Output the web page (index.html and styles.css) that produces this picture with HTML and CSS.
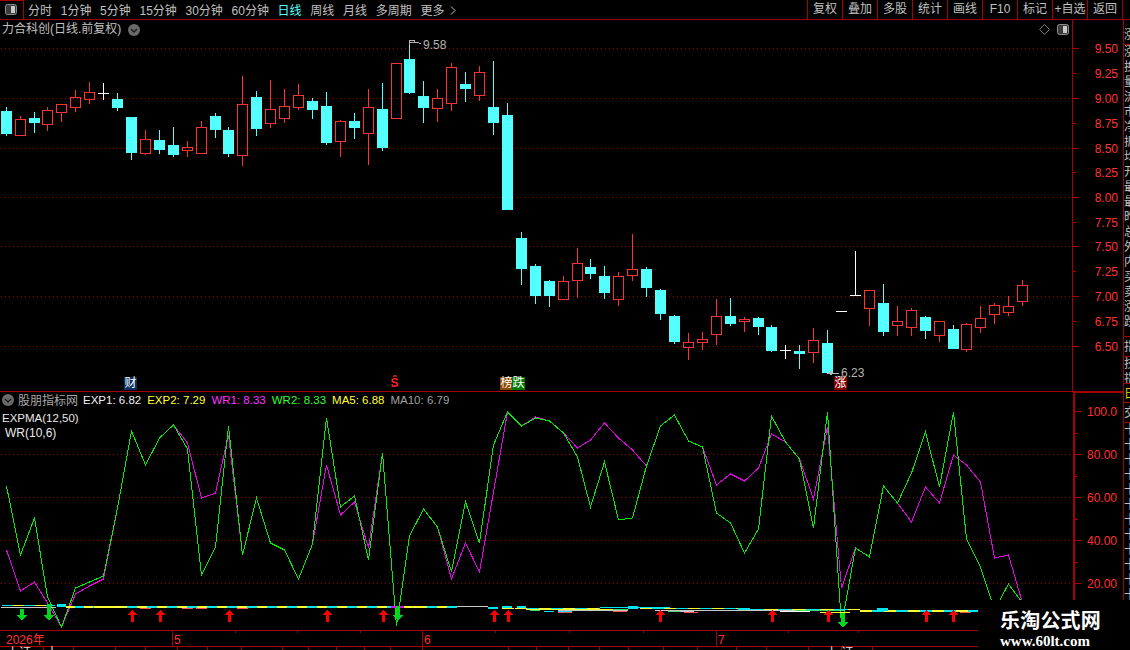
FILE: index.html
```html
<!DOCTYPE html>
<html lang="en">
<head>
    <meta charset="UTF-8">
    <meta name="viewport" content="width=device-width, initial-scale=1.0">
    <title>力合科创 日线</title>
    <link rel="stylesheet" href="styles.css">
</head>
<body>
    <div class="terminal">
        <div class="toolbar">
            <div class="panel-toggle">
                <svg class="panel-icon" width="12" height="11" viewBox="0 0 12 11"><rect x="0.5" y="0.5" width="11" height="10" rx="2" fill="#3c3c3c" stroke="#8c8c8c"/><rect x="6" y="2" width="4" height="7" fill="#c8c8c8"/></svg>
            </div>
            <div class="periods">
                <span>分时</span>
                <span>1分钟</span>
                <span>5分钟</span>
                <span>15分钟</span>
                <span>30分钟</span>
                <span>60分钟</span>
                <span class="active">日线</span>
                <span>周线</span>
                <span>月线</span>
                <span>多周期</span>
                <span>更多 <svg class="more-icon" width="6" height="9" viewBox="0 0 6 9"><path d="M1 0.5l4 4-4 4" fill="none" stroke="#c0c0c0"/></svg></span>
            </div>
            <div class="tool-buttons">
                <span>复权</span>
                <span>叠加</span>
                <span>多股</span>
                <span>统计</span>
                <span>画线</span>
                <span>F10</span>
                <span>标记</span>
                <span>+自选</span>
                <span>返回</span>
            </div>
        </div>

        <div class="workspace">
            <div class="charts">
                <div class="main-panel">
                    <svg id="mainChart" class="chart" width="1123" height="371" viewBox="0 20 1123 371"></svg>
                    <div class="stock-title">
                        力合科创(日线.前复权)
                        <svg class="round-icon" width="12" height="12" viewBox="0 0 12 12"><circle cx="6" cy="6" r="6" fill="#6a6a6a"/><path d="M3 5l3 3 3-3" fill="none" stroke="#1c1c1c" stroke-width="1.5"/></svg>
                    </div>
                    <div class="corner-icons">
                        <svg width="11" height="11" viewBox="0 0 11 11"><path d="M5.5 0.5l5 5-5 5-5-5z" fill="none" stroke="#777"/></svg>
                        <svg width="12" height="11" viewBox="0 0 12 11"><rect x="0.5" y="0.5" width="11" height="10" rx="2" fill="#3c3c3c" stroke="#8c8c8c"/><rect x="6" y="2" width="4" height="7" fill="#c8c8c8"/></svg>
                    </div>
                    <span class="badge badge-cai">财</span>
                    <span class="badge badge-s">Ŝ</span>
                    <span class="badge badge-bang">榜</span>
                    <span class="badge badge-die">跌</span>
                    <span class="badge badge-zhang">涨</span>
                    <span class="price-note note-high">9.58</span>
                    <span class="price-note note-low">6.23</span>
                </div>

                <div class="indicator-panel">
                    <svg id="indicatorChart" class="chart" width="1123" height="238" viewBox="0 392 1123 238"></svg>
                    <div class="legend">
                        <svg class="round-icon" width="12" height="12" viewBox="0 0 12 12"><circle cx="6" cy="6" r="6" fill="#6a6a6a"/><path d="M3 5l3 3 3-3" fill="none" stroke="#1c1c1c" stroke-width="1.5"/></svg>
                        <span class="legend-name">股朋指标网</span>
                        <span class="c-white">EXP1: 6.82</span>
                        <span class="c-yellow">EXP2: 7.29</span>
                        <span class="c-magenta">WR1: 8.33</span>
                        <span class="c-green">WR2: 8.33</span>
                        <span class="c-yellow">MA5: 6.88</span>
                        <span class="c-grey">MA10: 6.79</span>
                    </div>
                    <div class="formula-names">
                        <div class="formula-exp">EXPMA(12,50)</div>
                        <div class="formula-wr">WR(10,6)</div>
                    </div>
                </div>

                <svg id="timeAxis" class="chart" width="1123" height="20" viewBox="0 630 1123 20"></svg>
            </div>

            <div class="side-strip">
                <div class="side-cell">涨跌</div>
                <div class="side-list">
                    <div>涨</div><div>换</div><div>量</div><div>流</div><div>市</div><div>净</div><div>振</div><div>均</div>
                    <div>开</div><div>最</div><div>最</div><div>昨</div><div>总</div><div>外</div><div>内</div><div>买</div>
                    <div>卖</div><div>涨</div><div>跌</div>
                </div>
                <div class="side-cell">指</div>
                <div class="side-list short">
                    <div>技</div><div>指</div>
                </div>
                <div class="side-cell side-yellow">日</div>
                <div class="side-cell">交</div>
                <div class="side-list">
                    <div>十</div><div>十</div><div>十</div><div>十</div><div>十</div><div>十</div><div>十</div><div>十</div>
                    <div>十</div><div>十</div><div>十</div><div>十</div>
                </div>
            </div>
        </div>

        <div class="watermark">
            <div class="watermark-name">乐淘公式网</div>
            <div class="watermark-url">www.60lt.com</div>
        </div>
    </div>

    <script src="chart.js"></script>
</body>
</html>
```

FILE: styles.css
```css
* {
    margin: 0;
    padding: 0;
    box-sizing: border-box;
}
body {
    background: #000;
    color: #c0c0c0;
    font-family: "Liberation Sans", "Noto Sans CJK SC", sans-serif;
    font-size: 12px;
    overflow: hidden;
}
.terminal {
    position: relative;
    width: 1130px;
    height: 650px;
    overflow: hidden;
}
.toolbar {
    display: flex;
    align-items: stretch;
    height: 20px;
    border-bottom: 1px solid #a80000;
}
.panel-toggle {
    display: flex;
    width: 24px;
    padding: 3px 0 0 5px;
    border-top: 1px solid #a80000;
    border-right: 1px solid #a80000;
}
.periods {
    display: flex;
    align-items: center;
    gap: 8.7px;
    padding-left: 4px;
    white-space: nowrap;
}
.periods .active {
    color: #54ffff;
}
.more-icon {
    margin-left: 2px;
}
.tool-buttons {
    display: flex;
    margin-left: auto;
    margin-right: 7px;
    width: 316px;
}
.tool-buttons span {
    flex: 1;
    border-left: 1px solid #a80000;
    line-height: 19px;
    text-align: center;
    white-space: nowrap;
}
.tool-buttons span:last-child {
    border-right: 1px solid #a80000;
}
.workspace {
    display: flex;
    height: 630px;
}
.charts {
    width: 1123px;
    flex-shrink: 0;
}
.chart {
    display: block;
    shape-rendering: crispEdges;
}
.main-panel {
    position: relative;
    height: 372px;
    border-bottom: 1px solid #a80000;
}
.indicator-panel {
    position: relative;
    height: 238px;
}
.stock-title {
    position: absolute;
    left: 2px;
    top: 1px;
    display: flex;
    align-items: center;
    gap: 7px;
    white-space: nowrap;
    line-height: 17px;
}
.corner-icons {
    position: absolute;
    left: 1039px;
    top: 4px;
    display: flex;
    gap: 7px;
}
.badge {
    position: absolute;
    top: 357px;
    width: 13px;
    height: 13px;
    color: #fff;
    line-height: 13px;
    text-align: center;
}
.badge-cai {
    left: 124px;
    background: #0a3060;
}
.badge-s {
    left: 388px;
    color: #ff2020;
    font-weight: bold;
}
.badge-bang {
    left: 500px;
    background: #8a4a00;
}
.badge-die {
    left: 512px;
    background: #007800;
}
.badge-zhang {
    left: 834px;
    background: #800000;
}
.price-note {
    position: absolute;
    color: #b4b4b4;
    line-height: 9px;
}
.note-high {
    left: 423px;
    top: 21px;
}
.note-low {
    left: 841px;
    top: 349px;
}
.legend {
    position: absolute;
    left: 2px;
    top: 0;
    display: flex;
    align-items: center;
    gap: 6px;
    height: 15px;
    font-size: 11.5px;
    white-space: nowrap;
}
.legend .legend-name {
    margin: 0 -1px 0 -2px;
    color: #a8a8a8;
    font-size: 12px;
}
.c-white { color: #f0f0f0; }
.c-yellow { color: #ffff32; }
.c-magenta { color: #ff32ff; }
.c-green { color: #32ff32; }
.c-grey { color: #a0a0a0; }
.formula-names {
    position: absolute;
    left: 2px;
    top: 19px;
    color: #e8e8e8;
    line-height: 15px;
}
.formula-exp {
    font-size: 11.5px;
}
.formula-wr {
    padding-left: 3px;
}
.side-strip {
    width: 7px;
    padding-top: 5px;
    border-left: 1px solid #a80000;
    overflow: hidden;
}
.side-cell {
    height: 20px;
    border-bottom: 1px solid #a80000;
    line-height: 20px;
    white-space: nowrap;
}
.side-yellow {
    color: #d8d800;
    height: 19px;
}
.side-list {
    height: 292px;
    line-height: 15px;
    overflow: hidden;
    border-bottom: 1px solid #a80000;
}
.side-list.short {
    height: 27px;
}
.watermark {
    position: absolute;
    right: 0;
    bottom: 0;
    width: 152px;
    height: 50px;
    padding: 7px 0 0 22px;
    background: #000;
    color: #fff;
}
.watermark-name {
    font-family: "Noto Sans CJK SC", sans-serif;
    font-size: 20px;
    font-weight: bold;
    letter-spacing: 0.2px;
    line-height: 26px;
}
.watermark-url {
    font-family: "Liberation Serif", serif;
    font-size: 15px;
    font-weight: bold;
    line-height: 16px;
}
/* svg bits */
.axis-label {
    fill: #ff3232;
    font-size: 12px;
    text-anchor: end;
}
.time-label {
    fill: #ff3232;
    font-size: 12px;
}
.status-text {
    fill: #e0e0e0;
    font-size: 12px;
}
.axis-line {
    stroke: #a80000;
}
.candle-red { fill: none; stroke: #ff3232; }
.candle-cyan { fill: #54ffff; stroke: #54ffff; }
.candle-white { fill: none; stroke: #fff; }
.wr-fast { fill: none; stroke: #00f000; }
.wr-slow { fill: none; stroke: #f000f0; }
.note-line { fill: none; stroke: #b4b4b4; }
```

FILE: chart.js
```js
// [x, wick top, body top, body bottom, wick bottom, colour]
var candles = [
    [6,107,111,133,135,'c'],[20,116,119,135,135,'r'],[34,112,118,122,132,'c'],[47,107,110,124,130,'r'],
    [61,104,104,112,121,'r'],[75,90,97,107,111,'r'],[89,82,92,99,103,'r'],[103,83,93,93,99,'w'],
    [117,93,99,107,110,'c'],[131,117,117,152,159,'c'],[145,130,139,153,154,'r'],[159,130,140,149,153,'c'],
    [173,127,145,154,156,'c'],[187,141,147,150,156,'r'],[201,121,127,153,153,'r'],[215,113,116,129,137,'c'],
    [228,127,130,153,156,'c'],[242,76,104,155,165,'r'],[256,91,97,128,135,'c'],[270,80,109,123,127,'r'],
    [284,89,106,118,122,'r'],[298,84,95,107,109,'r'],[312,98,101,109,118,'c'],[326,92,106,142,144,'c'],
    [340,120,121,141,156,'r'],[354,113,121,127,138,'c'],[368,89,107,133,164,'r'],[382,83,109,147,150,'c'],
    [396,63,63,118,118,'r'],[409,40,59,92,93,'c'],[423,81,96,107,122,'c'],[437,89,98,108,121,'r'],
    [451,63,67,103,110,'r'],[465,72,84,88,101,'c'],[479,66,72,95,100,'r'],[493,61,107,122,134,'c'],
    [507,103,115,209,209,'c'],[521,232,238,268,284,'c'],[535,264,266,295,303,'c'],[549,280,281,295,306,'c'],
    [563,276,281,299,299,'r'],[577,248,263,280,297,'r'],[590,259,267,273,278,'c'],[604,266,276,292,298,'c'],
    [618,272,276,299,305,'r'],[632,234,269,275,280,'r'],[646,267,269,287,296,'c'],[660,289,290,313,319,'c'],
    [674,315,316,341,343,'c'],[688,333,342,347,359,'r'],[702,332,339,342,349,'r'],[716,299,316,334,344,'r'],
    [730,298,316,323,325,'c'],[744,317,319,321,331,'r'],[758,317,318,326,334,'c'],[771,325,327,350,351,'c'],
    [785,345,350,350,358,'w'],[799,345,351,353,368,'c'],[813,328,340,352,362,'r'],[827,330,343,372,372,'c'],
    [841,311,311,311,311,'w'],[855,251,295,295,295,'w'],[869,290,290,308,325,'r'],[883,284,303,331,335,'c'],
    [897,306,321,325,335,'r'],[911,308,310,327,335,'r'],[925,316,317,330,338,'c'],[939,321,321,335,341,'r'],
    [953,325,329,348,348,'c'],[966,323,324,349,351,'r'],[980,306,318,327,332,'r'],[994,303,305,314,323,'r'],
    [1008,296,306,312,315,'r'],[1022,280,285,301,305,'r']
];

var wrFast = [486,555,518,597,627,588,582,576,508,431,465,438,425,449,575,547,426,555,498,543,550,579,544,418,
    507,496,560,453,626,536,509,527,572,502,543,445,412,426,418,421,433,457,507,462,520,518,466,426,415,
    441,447,513,523,553,529,416,442,459,528,412,626,548,557,486,503,473,432,487,412,539,567,610,584,603];
var wrSlow = [550,591,582,603,627,594,586,579,508,431,465,438,425,443,498,493,435,555,498,543,550,579,544,465,
    515,502,548,453,626,536,509,527,579,543,572,492,412,426,417,421,433,448,440,423,438,450,466,426,415,
    441,447,485,474,481,468,434,442,459,499,427,588,548,557,486,503,522,487,503,455,465,482,558,555,603];

var SVG_NS = 'http://www.w3.org/2000/svg';

function add(svg, tag, attrs, text) {
    var el = document.createElementNS(SVG_NS, tag);
    for (var k in attrs) el.setAttribute(k, attrs[k]);
    if (text) el.textContent = text;
    svg.appendChild(el);
    return el;
}

function hLine(svg, x1, x2, y, cls) {
    add(svg, 'line', { x1: x1, x2: x2, y1: y + 0.5, y2: y + 0.5, 'class': cls });
}

function vLine(svg, x, y1, y2, cls) {
    add(svg, 'line', { x1: x + 0.5, x2: x + 0.5, y1: y1, y2: y2, 'class': cls });
}

function fillRect(svg, x, y, w, h, color) {
    add(svg, 'rect', { x: x, y: y, width: w, height: h, fill: color });
}

// one pixel every four, dash arrays come out too heavy here
function dotRow(svg, y) {
    var d = '';
    for (var x = 1; x < 1072; x += 4) d += 'M' + x + ' ' + y + 'h1v1h-1z';
    add(svg, 'path', { d: d, fill: '#a00000' });
}

function drawCandles(svg) {
    candles.forEach(function (c) {
        var x = c[0], cls = { r: 'candle-red', c: 'candle-cyan', w: 'candle-white' }[c[5]];
        if (c[1] < c[2]) vLine(svg, x, c[1], c[2], cls);
        if (c[3] < c[4]) vLine(svg, x, c[3], c[4] + 1, cls);
        if (c[2] == c[3]) {
            hLine(svg, x - 5, x + 6, c[2], cls);
        } else {
            add(svg, 'rect', { x: x - 4.5, y: c[2] + 0.5, width: 10, height: c[3] - c[2], 'class': cls });
        }
    });
}

function drawPriceAxis(svg) {
    var labels = ['9.50','9.25','9.00','8.75','8.50','8.25','8.00','7.75','7.50','7.25','7.00','6.75','6.50'];
    var ys = [48,73,98,123,148,172,197,222,246,271,296,321,346];
    vLine(svg, 1072, 20, 391, 'axis-line');
    ys.forEach(function (y, i) {
        if (i % 2 == 0) dotRow(svg, y);
        hLine(svg, 1073, i % 2 == 0 ? 1079 : 1076, y, 'axis-line');
        add(svg, 'text', { x: 1118, y: y + 5, 'class': 'axis-label' }, labels[i]);
    });
}

function drawNotes(svg) {
    add(svg, 'polyline', { points: '409.5,45 409.5,40 414,40 414,42 409.5,42', 'class': 'note-line' });
    add(svg, 'polyline', { points: '414,43 417,42 421,44', 'class': 'note-line' });
    add(svg, 'polyline', { points: '839,373 829,373 832,371 829,373 832,375', 'class': 'note-line' });
}

function drawWr(svg) {
    var labels = [[411,'100.0'],[454,'80.00'],[497,'60.00'],[540,'40.00'],[583,'20.00']];
    labels.forEach(function (l, i) {
        if (i > 0) dotRow(svg, l[0]);
        hLine(svg, 1075, 1081, l[0], 'axis-line');
        hLine(svg, 1075, 1078, l[0] + 22, 'axis-line');
        add(svg, 'text', { x: 1117, y: l[0] + 5, 'class': 'axis-label' }, l[1]);
    });
    fillRect(svg, 1073, 392, 2, 238, '#a80000');
    fillRect(svg, 1073, 392, 50, 1, '#a80000');
    add(svg, 'polyline', { points: candles.map(function (c, i) { return (c[0] + 0.5) + ',' + wrSlow[i]; }).join(' '), 'class': 'wr-slow' });
    add(svg, 'polyline', { points: candles.map(function (c, i) { return (c[0] + 0.5) + ',' + wrFast[i]; }).join(' '), 'class': 'wr-fast' });
}

// two colours taking turns along one strip
function band(svg, x1, x2, y, h, a, b, step) {
    var on = true;
    for (var x = x1; x < x2; x += step) {
        fillRect(svg, x, y, Math.min(step, x2 - x), h, on ? a : b);
        on = !on;
    }
}

function drawStrips(svg) {
    var cyan = '#00e6f0', yellow = '#ffff32', grey = '#c8c8c8', red = '#ff5050';
    fillRect(svg, 1, 607, 55, 1, grey);
    band(svg, 2, 55, 605, 1, cyan, yellow, 11);
    fillRect(svg, 57, 604, 9, 3, cyan);
    band(svg, 66, 127, 606, 2, yellow, cyan, 9);
    fillRect(svg, 94, 606, 33, 2, yellow);
    band(svg, 127, 457, 606, 2, cyan, yellow, 10);
    [[140,151],[182,193],[196,207],[237,248]].forEach(function (r) { fillRect(svg, r[0], 608, r[1] - r[0], 1, red); });
    fillRect(svg, 391, 606, 13, 2, '#f000f0');
    fillRect(svg, 404, 606, 14, 2, yellow);
    fillRect(svg, 457, 606, 31, 1, grey);
    fillRect(svg, 488, 607, 10, 2, cyan);
    fillRect(svg, 502, 606, 10, 2, cyan);
    fillRect(svg, 502, 608, 12, 1, yellow);
    fillRect(svg, 517, 606, 9, 2, cyan);
    band(svg, 515, 600, 608, 1, yellow, cyan, 12);
    fillRect(svg, 526, 609, 100, 1, yellow);
    fillRect(svg, 530, 610, 10, 1, '#38e070');
    fillRect(svg, 544, 611, 10, 1, cyan);
    fillRect(svg, 558, 610, 60, 1, grey);
    fillRect(svg, 558, 611, 14, 1, cyan);
    fillRect(svg, 558, 612, 14, 1, red);
    fillRect(svg, 600, 607, 70, 1, cyan);
    fillRect(svg, 628, 606, 10, 3, cyan);
    fillRect(svg, 613, 609, 15, 1, '#38e070');
    fillRect(svg, 613, 610, 15, 1, grey);
    fillRect(svg, 613, 611, 14, 1, red);
    band(svg, 640, 738, 608, 1, yellow, cyan, 12);
    fillRect(svg, 655, 610, 150, 1, grey);
    fillRect(svg, 668, 611, 16, 1, '#38e070');
    fillRect(svg, 684, 612, 14, 1, red);
    fillRect(svg, 680, 611, 14, 1, grey);
    fillRect(svg, 738, 608, 12, 2, cyan);
    band(svg, 750, 860, 609, 1, cyan, yellow, 14);
    fillRect(svg, 780, 611, 30, 1, '#fff');
    fillRect(svg, 795, 610, 50, 1, '#38e070');
    fillRect(svg, 820, 612, 30, 1, yellow);
    band(svg, 860, 978, 610, 2, yellow, cyan, 12);
    fillRect(svg, 877, 608, 11, 3, cyan);
    fillRect(svg, 960, 612, 11, 1, red);

    [132,160,229,327,383,494,508,660,772,828,926,953].forEach(function (x) {
        add(svg, 'path', { d: 'M' + (x - 5) + ' 615h4v7h3v-7h4l-5.5-5z', fill: '#ff0000' });
    });
    [[21,609,620],[48,604,620],[397,606,620],[842,613,627]].forEach(function (a) {
        add(svg, 'path', { d: 'M' + (a[0] - 1) + ' ' + a[1] + 'h4V' + (a[2] - 5) + 'h3.5l-5.5 6-5.5-6h3.5z', fill: '#00d820' });
    });
}

function drawTimeAxis(svg) {
    hLine(svg, 0, 1123, 630, 'axis-line');
    hLine(svg, 0, 1123, 646, 'axis-line');
    [235,297,360,495,569,643,788,858].forEach(function (x) { vLine(svg, x, 631, 633, 'axis-line'); });
    [[172,'5'],[422,'6'],[716,'7']].forEach(function (t) {
        vLine(svg, t[0], 631, 646, 'axis-line');
        add(svg, 'text', { x: t[0] + 2, y: 644, 'class': 'time-label' }, t[1]);
    });
    add(svg, 'text', { x: 6, y: 644, 'class': 'time-label' }, '2026年');
    [43,73,115,145,177,207,241,282,308,336,364,390,422,508,536,568,599,628,663,697,736,766,808,841,872].forEach(function (x) {
        vLine(svg, x, 647, 650, 'axis-line');
    });
    add(svg, 'text', { x: 7, y: 657, 'class': 'status-text' }, '上证');
    add(svg, 'text', { x: 46, y: 657, 'class': 'status-text' }, '十');
    add(svg, 'text', { x: 826, y: 657, 'class': 'status-text' }, '上 证');
}

var main = document.getElementById('mainChart');
drawPriceAxis(main);
drawCandles(main);
drawNotes(main);

var lower = document.getElementById('indicatorChart');
drawWr(lower);
drawStrips(lower);

drawTimeAxis(document.getElementById('timeAxis'));
```
